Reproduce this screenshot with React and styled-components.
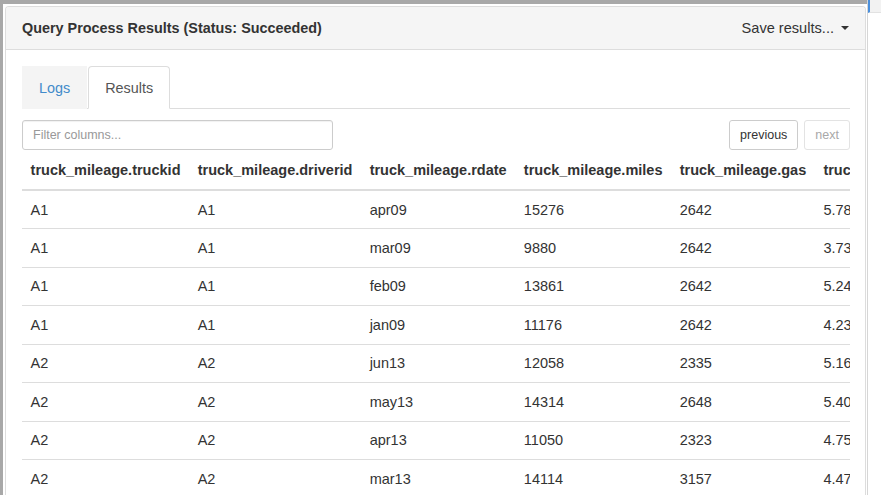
import React from "react";
import styled, { createGlobalStyle } from "styled-components";

const GlobalStyle = createGlobalStyle`
  html, body {
    margin: 0;
    padding: 0;
    background: #ffffff;
    overflow: hidden;
  }
  body {
    font-family: "Liberation Sans", Arial, Helvetica, sans-serif;
    color: #333333;
  }
  * { box-sizing: border-box; }
`;

const Screen = styled.div`
  display: flex;
  width: 881px;
  height: 495px;
  overflow: hidden;
`;

const Stage = styled.div`
  flex: none;
  width: 867px;
  height: 100%;
  display: flex;
  flex-direction: column;
  border-top: 4px solid #a8a8a8;
  border-left: 3px solid #a8a8a8;
  padding: 2px 1px 0 2px;
`;

const Rail = styled.div`
  flex: 1;
  height: 100%;
  border-left: 1px solid #d6d6d6;
`;

const RailCap = styled.div`
  height: 13px;
  background: #f2f2f2;
  border-left: 2px solid #4a8fdc;
  border-bottom: 1px solid #e2e2e2;
`;

const Panel = styled.section`
  flex: 1;
  display: flex;
  flex-direction: column;
  background: #ffffff;
  border: 1px solid #dddddd;
  border-bottom: none;
  border-radius: 4px 4px 0 0;
  overflow: hidden;
`;

const Heading = styled.header`
  flex: none;
  height: 43px;
  display: flex;
  align-items: center;
  justify-content: space-between;
  padding: 0 16px 0 16px;
  background: #f5f5f5;
  border-bottom: 1px solid #dddddd;
`;

const Title = styled.h3`
  margin: 0;
  font-size: 14.4px;
  font-weight: 700;
  color: #333333;
`;

const SaveMenu = styled.button`
  display: flex;
  align-items: center;
  gap: 7px;
  border: none;
  background: transparent;
  padding: 0;
  font-family: inherit;
  font-size: 14.6px;
  color: #333333;
  cursor: pointer;
`;

const Caret = styled.span`
  width: 0;
  height: 0;
  border-top: 4px solid #333333;
  border-left: 4px solid transparent;
  border-right: 4px solid transparent;
`;

const Body = styled.div`
  flex: 1;
  padding: 16px 15px 0 16px;
  display: flex;
  flex-direction: column;
  min-height: 0;
`;

const TabBar = styled.nav`
  display: flex;
  gap: 1px;
  border-bottom: 1px solid #dddddd;
`;

const Tab = styled.a`
  display: block;
  height: 43px;
  margin-bottom: -1px;
  padding: 1px 16px 0;
  line-height: 41px;
  font-size: 14.4px;
  text-decoration: none;
  border: 1px solid ${(p) => (p.$active ? "#dddddd" : "#f4f4f4")};
  border-bottom-color: ${(p) => (p.$active ? "#ffffff" : "#f4f4f4")};
  border-radius: ${(p) => (p.$active ? "4px 4px 0 0" : "0")};
  background: ${(p) => (p.$active ? "#ffffff" : "#f4f4f4")};
  color: ${(p) => (p.$active ? "#555555" : "#428bca")};
`;

const Toolbar = styled.div`
  margin-top: 11px;
  height: 30px;
  display: flex;
  justify-content: space-between;
  align-items: center;
`;

const FilterInput = styled.input`
  width: 311px;
  height: 30px;
  padding: 0 10px;
  border: 1px solid #cccccc;
  border-radius: 3px;
  font-family: inherit;
  font-size: 12.5px;
  color: #555555;
  box-shadow: inset 0 1px 1px rgba(0, 0, 0, 0.06);
  outline: none;
  &::placeholder { color: #999999; }
`;

const Pager = styled.div`
  display: flex;
  gap: 6px;
`;

const PageButton = styled.button`
  height: 30px;
  padding: 0 10px;
  border: 1px solid ${(p) => (p.disabled ? "#e3e3e3" : "#cccccc")};
  border-radius: 3px;
  background: #ffffff;
  font-family: inherit;
  font-size: 12.5px;
  color: ${(p) => (p.disabled ? "#a8a8a8" : "#333333")};
`;

const TableWrap = styled.div`
  overflow: hidden;
  width: 100%;
`;

const Table = styled.table`
  border-collapse: collapse;
  white-space: nowrap;
  font-size: 14.5px;
  color: #333333;
`;

const Th = styled.th`
  height: 40px;
  padding: 0 8.6px;
  text-align: left;
  font-weight: 700;
  vertical-align: middle;
  border-bottom: 2px solid #dddddd;
`;

const Td = styled.td`
  height: 38.5px;
  padding: 0 8.6px;
  vertical-align: middle;
  border-top: 1px solid #dddddd;
`;

const columns = [
  "truck_mileage.truckid",
  "truck_mileage.driverid",
  "truck_mileage.rdate",
  "truck_mileage.miles",
  "truck_mileage.gas",
  "truck_mileage.mpg",
];

const rows = [
  ["A1", "A1", "apr09", 15276, 2642],
  ["A1", "A1", "mar09", 9880, 2642],
  ["A1", "A1", "feb09", 13861, 2642],
  ["A1", "A1", "jan09", 11176, 2642],
  ["A2", "A2", "jun13", 12058, 2335],
  ["A2", "A2", "may13", 14314, 2648],
  ["A2", "A2", "apr13", 11050, 2323],
  ["A2", "A2", "mar13", 14114, 3157],
];

export default function App() {
  return (
    <>
      <GlobalStyle />
      <Screen>
        <Stage>
          <Panel>
            <Heading>
              <Title>Query Process Results (Status: Succeeded)</Title>
              <SaveMenu>
                Save results...
                <Caret />
              </SaveMenu>
            </Heading>
            <Body>
              <TabBar>
                <Tab href="#logs">Logs</Tab>
                <Tab href="#results" $active>
                  Results
                </Tab>
              </TabBar>
              <Toolbar>
                <FilterInput placeholder="Filter columns..." />
                <Pager>
                  <PageButton>previous</PageButton>
                  <PageButton disabled>next</PageButton>
                </Pager>
              </Toolbar>
              <TableWrap>
                <Table>
                  <thead>
                    <tr>
                      {columns.map((c) => (
                        <Th key={c}>{c}</Th>
                      ))}
                    </tr>
                  </thead>
                  <tbody>
                    {rows.map((r, i) => (
                      <tr key={i}>
                        <Td>{r[0]}</Td>
                        <Td>{r[1]}</Td>
                        <Td>{r[2]}</Td>
                        <Td>{r[3]}</Td>
                        <Td>{r[4]}</Td>
                        <Td>{String(r[3] / r[4])}</Td>
                      </tr>
                    ))}
                  </tbody>
                </Table>
              </TableWrap>
            </Body>
          </Panel>
        </Stage>
        <Rail>
          <RailCap />
        </Rail>
      </Screen>
    </>
  );
}
